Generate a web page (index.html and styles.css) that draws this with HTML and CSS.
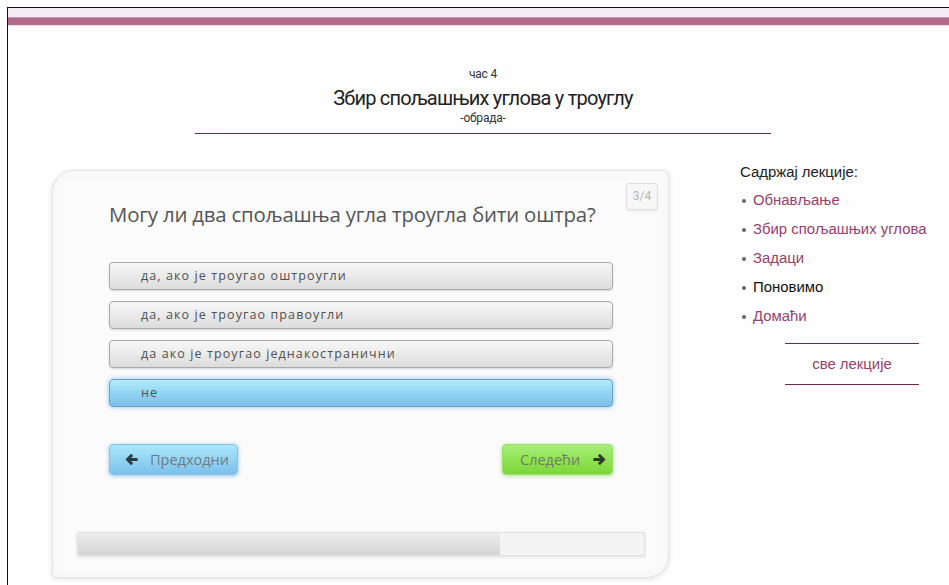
FILE: index.html
```html
<!DOCTYPE html>
<html lang="sr">
<head>
<meta charset="utf-8">
<title>Збир спољашњих углова у троуглу</title>
<link rel="stylesheet" href="styles.css">
</head>
<body>
<div class="frame">
  <div class="topbar"><div class="topbar-strip"></div></div>

  <header class="lesson-head">
    <div class="lesson-num">час 4</div>
    <h1 class="lesson-title">Збир спољашњих углова у троуглу</h1>
    <div class="lesson-type">-обрада-</div>
  </header>

  <div class="main">
    <section class="quiz-card">
      <span class="quiz-count">3/4</span>
      <h2 class="quiz-question">Могу ли два спољашња угла троугла бити оштра?</h2>

      <div class="quiz-body">
        <ul class="answers">
          <li class="answer">да, ако је троугао оштроугли</li>
          <li class="answer">да, ако је троугао правоугли</li>
          <li class="answer">да ако је троугао једнакостранични</li>
          <li class="answer answer-selected">не</li>
        </ul>

        <div class="quiz-nav">
          <button class="nav-btn nav-prev" type="button">
            <svg class="arrow" viewBox="0 0 14 14" width="13" height="13" aria-hidden="true">
              <path d="M0.5 7 L6.6 0.9 L8.8 3.1 L6.3 5.4 H13.5 V8.6 H6.3 L8.8 10.9 L6.6 13.1 Z" fill="#2c3a44"/>
            </svg>
            <span>Предходни</span>
          </button>
          <button class="nav-btn nav-next" type="button">
            <span>Следећи</span>
            <svg class="arrow" viewBox="0 0 14 14" width="13" height="13" aria-hidden="true">
              <path d="M13.5 7 L7.4 0.9 L5.2 3.1 L7.7 5.4 H0.5 V8.6 H7.7 L5.2 10.9 L7.4 13.1 Z" fill="#2f3b2a"/>
            </svg>
          </button>
        </div>
      </div>

      <div class="progress"><div class="progress-fill" style="width: 74.6%"></div></div>
    </section>

    <aside class="sidebar">
      <div class="toc-title">Садржај лекције:</div>
      <ul class="toc">
        <li><a href="#">Обнављање</a></li>
        <li><a href="#">Збир спољашњих углова</a></li>
        <li><a href="#">Задаци</a></li>
        <li class="toc-current">Поновимо</li>
        <li><a href="#">Домаћи</a></li>
      </ul>
      <a class="all-lessons" href="#">све лекције</a>
    </aside>
  </div>
</div>
</body>
</html>
```

FILE: styles.css
```css
* { box-sizing: border-box; }

html, body {
  margin: 0;
  padding: 0;
  background: #ffffff;
}

body {
  font-family: "Liberation Sans", Arial, sans-serif;
  color: #333;
  height: 585px;
  overflow: hidden;
}

.frame {
  margin: 7px 0 0 7px;
  border-top: 1px solid #111;
  border-left: 1px solid #111;
  height: 578px;
  background: #fefefe;
}

/* two-tone ribbon across the top */
.topbar {
  height: 18px;
  background: #f5ebf5;
  padding-top: 9px;
}
.topbar-strip {
  height: 9px;
  background: #b26a8e;
  border-top: 1px solid #c99ab3;
  border-bottom: 1px solid #eadde6;
}

.lesson-head {
  width: 576px;
  margin: 41px 0 0 187px;
  text-align: center;
  border-bottom: 1px solid #6d2b4d;
  padding-bottom: 9px;
  font-family: Roboto, sans-serif;
  color: #222;
}
.lesson-num {
  font-size: 12px;
  line-height: 14px;
  color: #333;
  letter-spacing: -0.2px;
}
.lesson-title {
  margin: 3px 0 0;
  font-weight: normal;
  font-size: 20px;
  line-height: 28px;
  letter-spacing: -0.8px;
  color: #222;
}
.lesson-type {
  font-size: 12px;
  line-height: 12px;
  color: #333;
  letter-spacing: -0.2px;
}

.main {
  display: flex;
  align-items: flex-start;
  margin-top: 36px;
}

.quiz-card {
  position: relative;
  margin-left: 44px;
  width: 617px;
  height: 408px;
  background: #fbfbfb;
  border: 1px solid #e4e4e4;
  border-radius: 22px 6px 22px 4px;
  box-shadow: 0 1px 5px rgba(0, 0, 0, 0.12), inset 0 0 18px rgba(0, 0, 0, 0.025);
  padding: 29px 0 0;
  display: flex;
  flex-direction: column;
}

.quiz-count {
  position: absolute;
  top: 12px;
  right: 10px;
  width: 32px;
  height: 27px;
  border: 1px solid #e0e0e0;
  border-radius: 3px;
  background: #f7f7f7;
  box-shadow: 0 1px 2px rgba(0, 0, 0, 0.08);
  font-family: Roboto, sans-serif;
  font-size: 12px;
  line-height: 25px;
  color: #b5b5b5;
  text-align: center;
}

.quiz-question {
  margin: 0 0 34px 56px;
  font-family: "Open Sans", sans-serif;
  font-weight: normal;
  font-size: 20.4px;
  line-height: 28px;
  color: #555;
  letter-spacing: -0.2px;
}

.quiz-body {
  margin-left: 56px;
  width: 504px;
}

.answers {
  list-style: none;
  margin: 0;
  padding: 0;
  display: flex;
  flex-direction: column;
  gap: 11px;
}
.answer {
  height: 28px;
  border: 1px solid #a9a9a9;
  border-radius: 4px;
  background: linear-gradient(#f7f7f7, #e9e9e9 55%, #dcdcdc);
  box-shadow: 0 1px 2px rgba(0, 0, 0, 0.15);
  padding-left: 31px;
  font-family: "Open Sans", sans-serif;
  font-size: 12.5px;
  letter-spacing: 1.1px;
  line-height: 25px;
  color: #505050;
}
.answer-selected {
  border-color: #6c9fc4;
  background: linear-gradient(#b3ebfa, #92d4f2 50%, #7bbfe8);
  box-shadow: 0 0 5px rgba(90, 170, 230, 0.7);
}

.quiz-nav {
  display: flex;
  justify-content: space-between;
  margin-top: 37px;
}
.nav-btn {
  display: flex;
  align-items: center;
  height: 31px;
  border-radius: 4px;
  font-family: "Open Sans", sans-serif;
  font-size: 14.5px;
  color: #6e7b84;
  padding: 0;
  cursor: pointer;
}
.nav-prev {
  width: 129px;
  border: 1px solid #86c3ea;
  background: linear-gradient(#abe7fa, #93d4f3 50%, #7cc0ea);
  box-shadow: 0 1px 4px rgba(70, 150, 210, 0.55);
  padding-left: 15px;
  gap: 12px;
}
.nav-next {
  width: 111px;
  border: 1px solid #96de66;
  background: linear-gradient(#a8ee7c, #8fe352 50%, #7ed53a);
  box-shadow: 0 1px 4px rgba(110, 200, 60, 0.55);
  color: #6f7d66;
  padding-left: 17px;
  gap: 13px;
}
.arrow { flex: none; }

.progress {
  margin: 57px 23px 0 24px;
  height: 24px;
  border: 1px solid #e2e2e2;
  background: #f4f4f4;
  box-shadow: 0 1px 3px rgba(0, 0, 0, 0.12);
}
.progress-fill {
  height: 100%;
  background: linear-gradient(#ececec, #dfdfdf 60%, #d4d4d4);
}

.sidebar {
  margin-left: 71px;
  margin-top: -7px;
  width: 205px;
  font-family: "Liberation Sans", Arial, sans-serif;
  font-size: 14.9px;
  color: #222;
}
.toc-title {
  line-height: 18px;
}
.toc {
  list-style: none;
  margin: 10px 0 0;
  padding: 0;
}
.toc li {
  line-height: 18px;
  margin-bottom: 11px;
  padding-left: 13px;
  position: relative;
}
.toc li::before {
  content: "";
  position: absolute;
  left: 2px;
  top: 8px;
  width: 4px;
  height: 4px;
  border-radius: 50%;
  background: #666;
}
.toc a {
  color: #97406c;
  text-decoration: none;
}
.toc-current { color: #111; }

.all-lessons {
  display: block;
  width: 134px;
  margin: 18px 0 0 45px;
  border-top: 1px solid #6d2b4d;
  border-bottom: 1px solid #6d2b4d;
  text-align: center;
  line-height: 40px;
  color: #97406c;
  text-decoration: none;
}
```
